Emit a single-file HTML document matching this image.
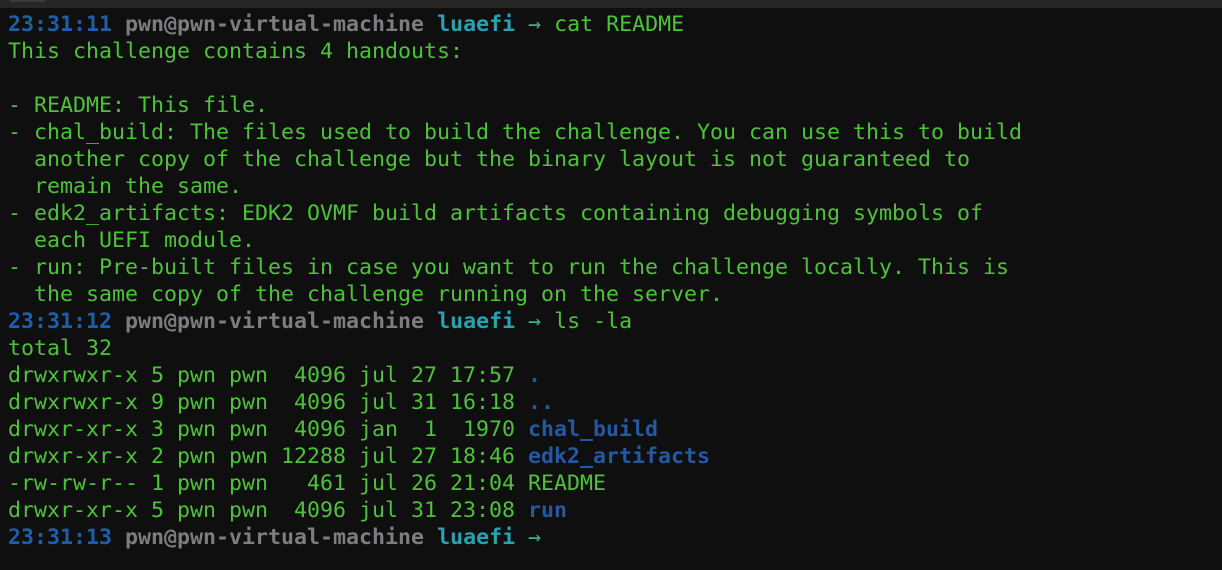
<!DOCTYPE html>
<html><head><style>
html,body{margin:0;padding:0;background:#0f0f0f;width:1222px;height:570px;overflow:hidden}
.top{position:absolute;left:0;top:0;width:1222px;height:8px;background:#262626}
.tab{position:absolute;left:10px;top:0;width:35px;height:2px;background:#3a3a3a}
pre{position:absolute;left:8px;top:11px;margin:0;font-family:"DejaVu Sans Mono","Liberation Mono",monospace;font-size:21.6px;line-height:27px;color:#4ec23a}
.t{color:#1f5fa8;font-weight:bold}
.u{color:#7d7d80;font-weight:bold}
.d{color:#2aa1b3;font-weight:bold}
.a{color:#3bb08f}
.b{color:#2458a0;font-weight:bold}
</style></head><body>
<div class="top"><div class="tab"></div></div>
<pre><span class="t">23:31:11</span> <span class="u">pwn@pwn-virtual-machine</span> <span class="d">luaefi</span> <span class="a">→</span> cat README
This challenge contains 4 handouts:

- README: This file.
- chal_build: The files used to build the challenge. You can use this to build
  another copy of the challenge but the binary layout is not guaranteed to
  remain the same.
- edk2_artifacts: EDK2 OVMF build artifacts containing debugging symbols of
  each UEFI module.
- run: Pre-built files in case you want to run the challenge locally. This is
  the same copy of the challenge running on the server.
<span class="t">23:31:12</span> <span class="u">pwn@pwn-virtual-machine</span> <span class="d">luaefi</span> <span class="a">→</span> ls -la
total 32
drwxrwxr-x 5 pwn pwn  4096 jul 27 17:57 <span class="b">.</span>
drwxrwxr-x 9 pwn pwn  4096 jul 31 16:18 <span class="b">..</span>
drwxr-xr-x 3 pwn pwn  4096 jan  1  1970 <span class="b">chal_build</span>
drwxr-xr-x 2 pwn pwn 12288 jul 27 18:46 <span class="b">edk2_artifacts</span>
-rw-rw-r-- 1 pwn pwn   461 jul 26 21:04 README
drwxr-xr-x 5 pwn pwn  4096 jul 31 23:08 <span class="b">run</span>
<span class="t">23:31:13</span> <span class="u">pwn@pwn-virtual-machine</span> <span class="d">luaefi</span> <span class="a">→</span></pre>
</body></html>
